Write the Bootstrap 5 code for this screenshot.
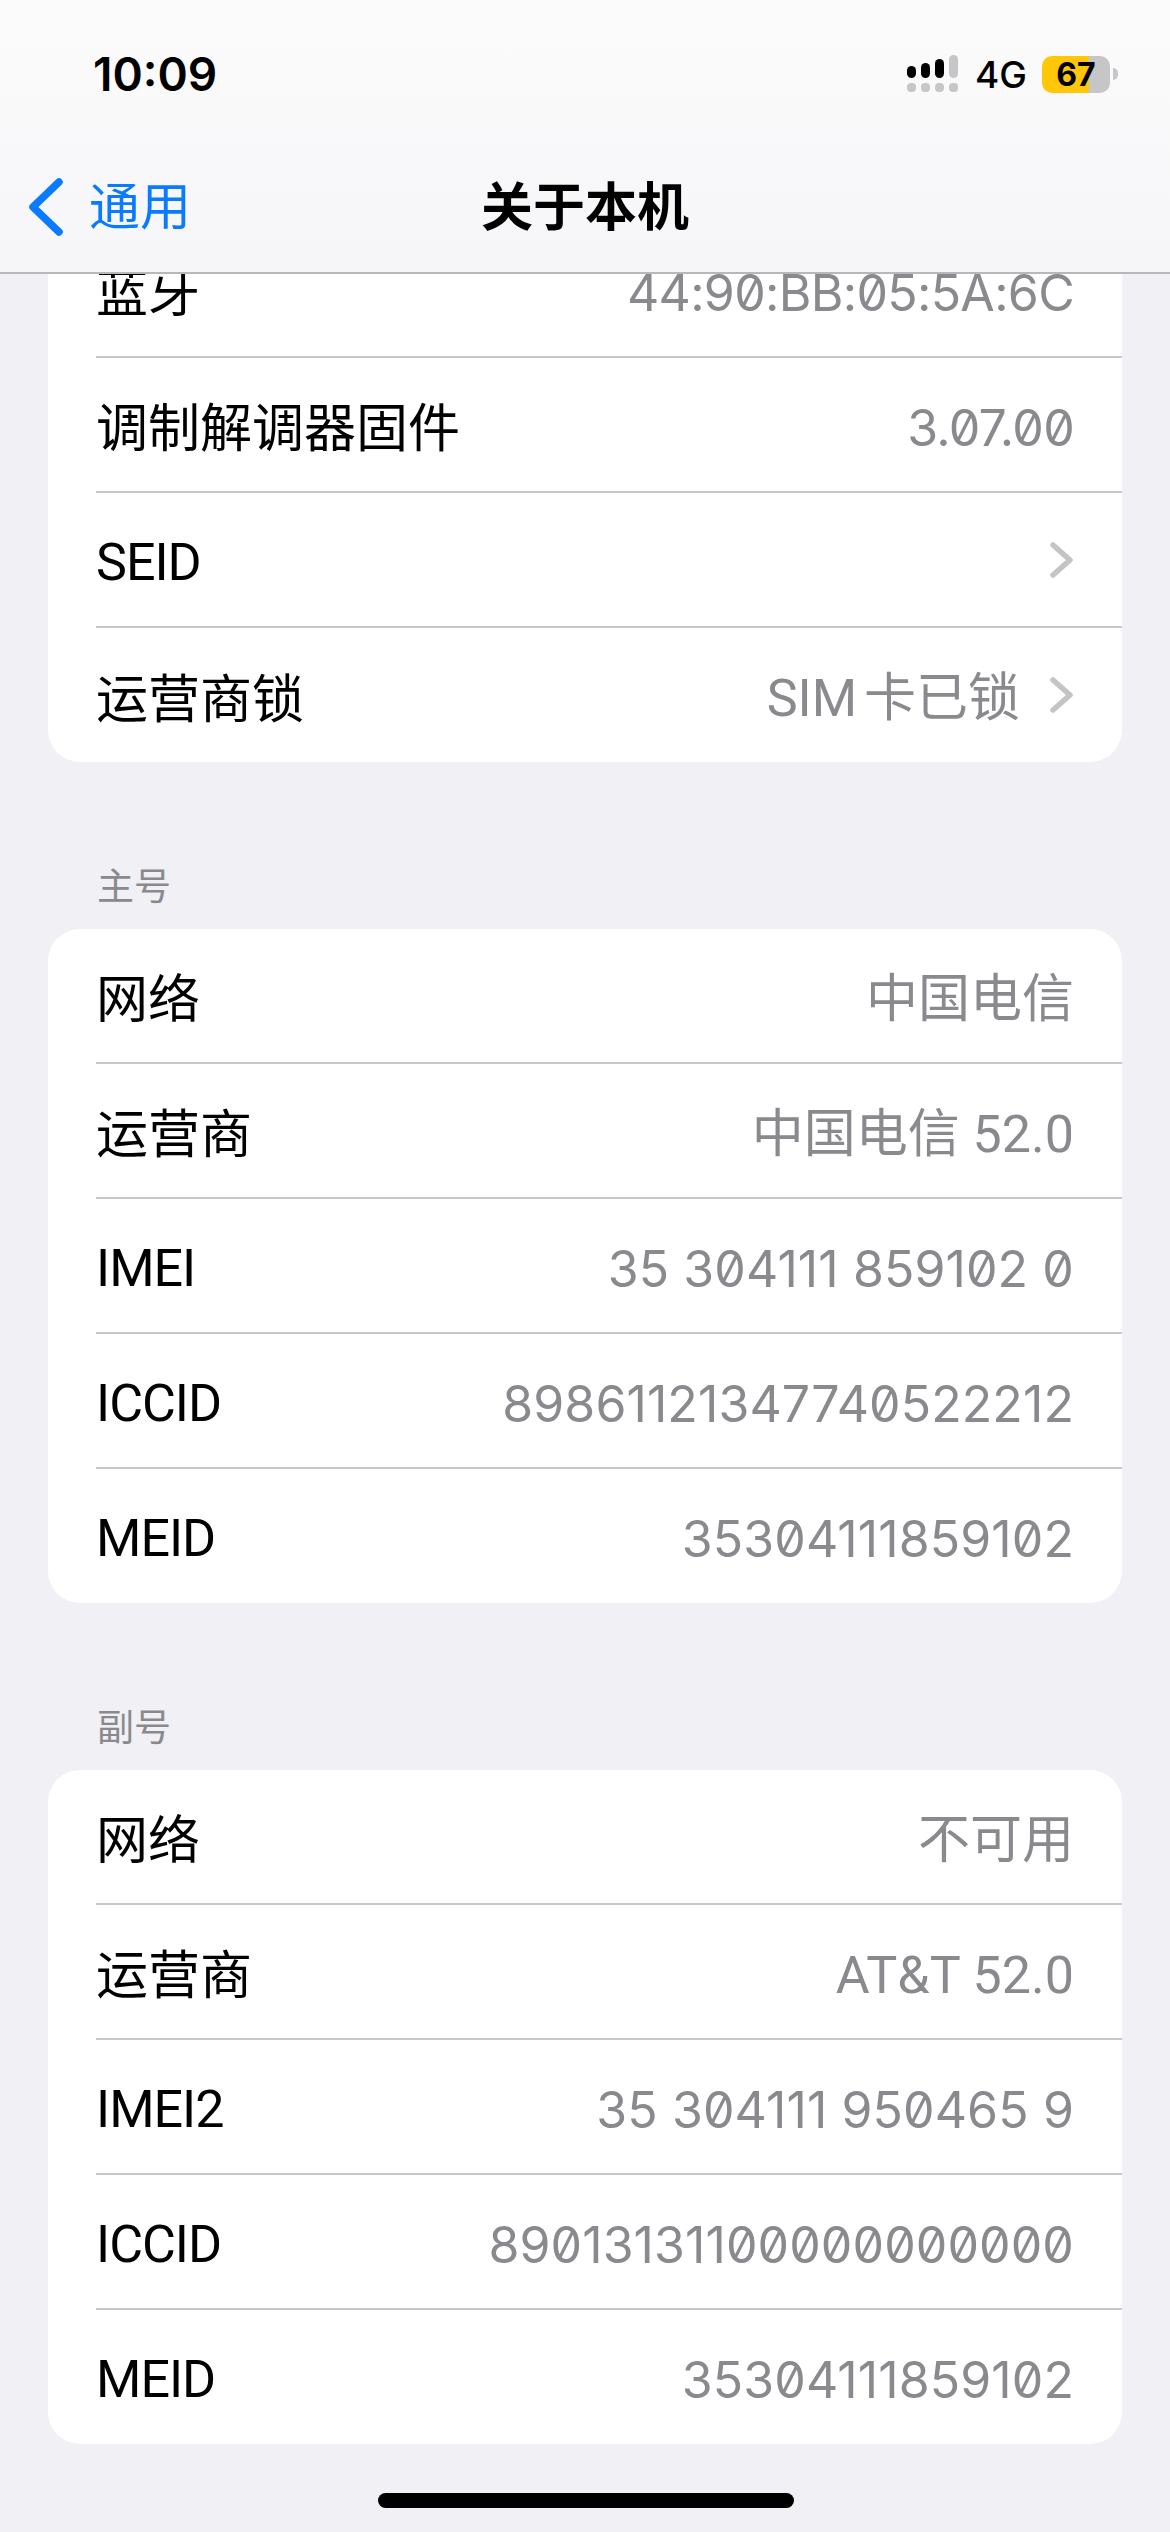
<!DOCTYPE html>
<html lang="zh-CN">
<head>
  <meta charset="UTF-8" />
  <meta name="viewport" content="width=device-width, initial-scale=1.0"/>
  <title>关于本机</title>
  <link href="https://cdn.jsdelivr.net/npm/bootstrap@5.3.4/dist/css/bootstrap.min.css" rel="stylesheet" />
  <style>
    html, body { height: 2532px; overflow: hidden; }
    body {
      background-color: #f0f0f5;
      color: #000;
      font-family: Roboto, "Noto Sans CJK SC", sans-serif;
    }
    .phone { width: 1170px; height: 2532px; position: relative; overflow: hidden; }
    .top-bar {
      position: absolute; top: 0; left: 0; right: 0; height: 274px; z-index: 5;
      background: linear-gradient(180deg, #fbfbfc, #f6f6f8);
      border-bottom: 2px solid #b8b8bb;
    }
    .status-row { height: 148px; padding-left: 93px; font-family: Inter, sans-serif; }
    .clock { font-size: 46px; font-weight: 600; line-height: 1; }
    .status-icons { position: absolute; top: 55px; left: 907px; font-family: Inter, sans-serif; }
    .net-type { font-size: 37px; line-height: 1; font-weight: 500; margin: 0 15px 0 16px; }
    .batt {
      width: 68px; height: 37px; border-radius: 10px; font-size: 32px; font-weight: 700; line-height: 37px;
      text-align: center; background: linear-gradient(90deg, #ffc60a 69%, #c6c6c8 69%);
    }
    .batt-tip { width: 5px; height: 12px; border-radius: 0 6px 6px 0; background: #c6c6c8; margin-left: 3px; }
    .nav-row { height: 124px; position: relative; }
    .back-link { position: absolute; left: 28px; top: 30px; color: #0a7aff; font-size: 51px; line-height: 1; gap: 25px; text-decoration: none; }
    .page-title { font-size: 52px; font-weight: 700; line-height: 1; padding-top: 35px; }
    .scroller { position: absolute; top: 223px; left: 48px; width: 1074px; }
    .group-box { background: #fff; border-radius: 32px; overflow: hidden; }
    .info-row {
      height: 135px; margin-left: 48px; padding: 6px 48px 0 0; font-size: 52px; line-height: 1;
      border-bottom: 2px solid #c8c8cc;
    }
    .info-row:last-child { border-bottom: 0; height: 134px; }
    .row-label { margin-top: 5px; }
    .row-label.latin { letter-spacing: -1px; margin-top: 0; }
    .row-value { color: #8a8a8e; margin-top: 2px; }
    .row-value.digits { font-family: Inter, sans-serif; font-size: 50px; font-feature-settings: "zero"; letter-spacing: 0.1px; margin-top: 0; }
    .row-value.digits.dotted { letter-spacing: -0.7px; }
    .row-value.sim-text { word-spacing: -6px; }
    .chev { margin: -6px 0 0 30px; }
    .group-head { color: #8a8a8e; font-size: 37px; line-height: 38px; padding-left: 49px; margin: 107px 0 22px; }
    .home-bar { position: absolute; left: 378px; top: 2493px; width: 416px; height: 15px; border-radius: 8px; background: #000; }
  </style>
</head>
<body>
  <div class="phone">
    <div class="top-bar">
      <div class="status-row d-flex align-items-center"><span class="clock">10:09</span></div>
      <div class="status-icons d-flex align-items-center">
        <svg width="52" height="38" viewBox="0 0 52 38">
          <rect x="0" y="11" width="9" height="12" rx="4.5" fill="#000"/>
          <rect x="14" y="8" width="9" height="15" rx="4.5" fill="#000"/>
          <rect x="28" y="4" width="9" height="19" rx="4.5" fill="#000"/>
          <rect x="42" y="0" width="9" height="23" rx="4.5" fill="#c6c6c8"/>
          <rect x="0" y="28" width="9" height="9" rx="4" fill="#c6c6c8"/>
          <rect x="14" y="28" width="9" height="9" rx="4" fill="#c6c6c8"/>
          <rect x="28" y="28" width="9" height="9" rx="4" fill="#c6c6c8"/>
          <rect x="42" y="28" width="9" height="9" rx="4" fill="#c6c6c8"/>
        </svg>
        <span class="net-type">4G</span>
        <span class="d-flex align-items-center">
          <span class="batt">67</span><span class="batt-tip"></span>
        </span>
      </div>
      <div class="nav-row text-center">
        <a class="back-link d-flex align-items-center" href="#">
          <svg width="36" height="58" viewBox="0 0 36 58"><path d="M31 4 L5 29 L31 54" fill="none" stroke="#0a7aff" stroke-width="7.5" stroke-linecap="round" stroke-linejoin="round"/></svg>
          <span>通用</span>
        </a>
        <div class="page-title">关于本机</div>
      </div>
    </div>

    <div class="scroller">
      <div class="group-box">
        <div class="info-row d-flex align-items-center justify-content-between"><span class="row-label">蓝牙</span><span class="row-value digits dotted">44:90:BB:05:5A:6C</span></div>
        <div class="info-row d-flex align-items-center justify-content-between"><span class="row-label">调制解调器固件</span><span class="row-value digits dotted">3.07.00</span></div>
        <div class="info-row d-flex align-items-center justify-content-between"><span class="row-label latin">SEID</span><span class="d-flex align-items-center"><svg class="chev" width="24" height="36" viewBox="0 0 24 36"><path d="M3 3 L20 18 L3 33" fill="none" stroke="#c4c4c7" stroke-width="5.5" stroke-linecap="round" stroke-linejoin="round"/></svg></span></div>
        <div class="info-row d-flex align-items-center justify-content-between"><span class="row-label">运营商锁</span><span class="d-flex align-items-center"><span class="row-value sim-text">SIM 卡已锁</span><svg class="chev" width="24" height="36" viewBox="0 0 24 36"><path d="M3 3 L20 18 L3 33" fill="none" stroke="#c4c4c7" stroke-width="5.5" stroke-linecap="round" stroke-linejoin="round"/></svg></span></div>
      </div>

      <div class="group-head">主号</div>
      <div class="group-box">
        <div class="info-row d-flex align-items-center justify-content-between"><span class="row-label">网络</span><span class="row-value">中国电信</span></div>
        <div class="info-row d-flex align-items-center justify-content-between"><span class="row-label">运营商</span><span class="row-value">中国电信 52.0</span></div>
        <div class="info-row d-flex align-items-center justify-content-between"><span class="row-label latin">IMEI</span><span class="row-value digits">35 304111 859102 0</span></div>
        <div class="info-row d-flex align-items-center justify-content-between"><span class="row-label latin">ICCID</span><span class="row-value digits">89861121347740522212</span></div>
        <div class="info-row d-flex align-items-center justify-content-between"><span class="row-label latin">MEID</span><span class="row-value digits">35304111859102</span></div>
      </div>

      <div class="group-head">副号</div>
      <div class="group-box">
        <div class="info-row d-flex align-items-center justify-content-between"><span class="row-label">网络</span><span class="row-value">不可用</span></div>
        <div class="info-row d-flex align-items-center justify-content-between"><span class="row-label">运营商</span><span class="row-value">AT&amp;T 52.0</span></div>
        <div class="info-row d-flex align-items-center justify-content-between"><span class="row-label latin">IMEI2</span><span class="row-value digits">35 304111 950465 9</span></div>
        <div class="info-row d-flex align-items-center justify-content-between"><span class="row-label latin">ICCID</span><span class="row-value digits">89013131100000000000</span></div>
        <div class="info-row d-flex align-items-center justify-content-between"><span class="row-label latin">MEID</span><span class="row-value digits">35304111859102</span></div>
      </div>
    </div>

    <div class="home-bar"></div>
  </div>
  <script src="https://cdn.jsdelivr.net/npm/bootstrap@5.3.4/dist/js/bootstrap.bundle.min.js"></script>
</body>
</html>
